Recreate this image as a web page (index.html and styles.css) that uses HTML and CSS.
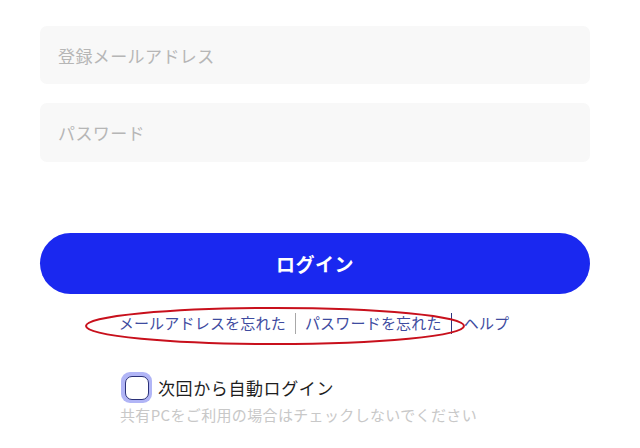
FILE: index.html
```html
<!DOCTYPE html>
<html lang="ja">
<head>
<meta charset="utf-8">
<link rel="stylesheet" href="styles.css">
</head>
<body>
<div class="form">
  <input class="field" type="text" placeholder="登録メールアドレス">
  <input class="field field-pw" type="password" placeholder="パスワード">
  <button class="login" type="button">ログイン</button>
  <div class="links">
    <svg class="mark" width="384" height="42" viewBox="0 0 384 42"><ellipse cx="192" cy="21" rx="189" ry="18" fill="none" stroke="#c8101c" stroke-width="2"/></svg>
    <a class="link">メールアドレスを忘れた</a>
    <span class="sep sep-gray"></span>
    <a class="link">パスワードを忘れた</a>
    <span class="sep sep-dark"></span>
    <a class="link link-help">ヘルプ</a>
  </div>
  <div class="remember">
    <label class="check-row">
      <span class="check"><span class="check-inner"></span></span>
      <span class="check-label">次回から自動ログイン</span>
    </label>
    <p class="hint">共有PCをご利用の場合はチェックしないでください</p>
  </div>
</div>
</body>
</html>
```
FILE: styles.css
```css
html, body {
  margin: 0;
  padding: 0;
  background: #ffffff;
}
body {
  font-family: "Noto Sans CJK JP", "Noto Sans", sans-serif;
}
.form {
  width: 550px;
  margin-left: 40px;
  padding-top: 26px;
  display: flex;
  flex-direction: column;
}
.field {
  box-sizing: border-box;
  height: 58px;
  width: 100%;
  border: none;
  outline: none;
  background: #f8f8f8;
  border-radius: 7px;
  padding: 0 18px;
  font-family: inherit;
  font-size: 17px;
  letter-spacing: 0.4px;
  color: #333;
}
.field::placeholder {
  color: #b6b6b6;
}
.field-pw {
  margin-top: 19px;
  height: 59px;
}
.login {
  margin-top: 71px;
  height: 61px;
  border: none;
  border-radius: 31px;
  background: #1a28f0;
  color: #ffffff;
  font-family: inherit;
  font-size: 19px;
  letter-spacing: 0.5px;
  font-weight: 700;
  padding: 0;
}
.links {
  position: relative;
  margin-top: 19px;
  height: 20px;
  display: flex;
  align-items: center;
  justify-content: center;
  font-size: 15px;
  letter-spacing: 0.2px;
  line-height: 20px;
  padding-right: 2px;
}
.mark {
  position: absolute;
  left: 43px;
  top: -8px;
}
.link {
  color: #3e4ba0;
  text-decoration: none;
}
.sep {
  width: 1px;
  height: 21px;
  margin: 0 9px;
}
.sep-gray {
  background: #a8a8a8;
}
.sep-dark {
  background: #2a3580;
  margin-right: 12px;
}
.remember {
  margin-top: 39px;
  margin-left: 81px;
}
.check-row {
  display: flex;
  align-items: center;
  gap: 6px;
}
.check {
  box-sizing: border-box;
  width: 31px;
  height: 31px;
  padding: 3.5px;
  border-radius: 9px;
  background: #b1b5f6;
  display: flex;
}
.check-inner {
  flex: 1;
  background: #ffffff;
  border: 1.5px solid #2b3178;
  border-radius: 7px;
}
.check-label {
  font-size: 17px;
  letter-spacing: 0.6px;
  color: #1e1e1e;
}
.hint {
  margin: 1px 0 0 -1px;
  font-size: 15px;
  letter-spacing: 0.35px;
  line-height: 22px;
  color: #c8c8c8;
}
```
